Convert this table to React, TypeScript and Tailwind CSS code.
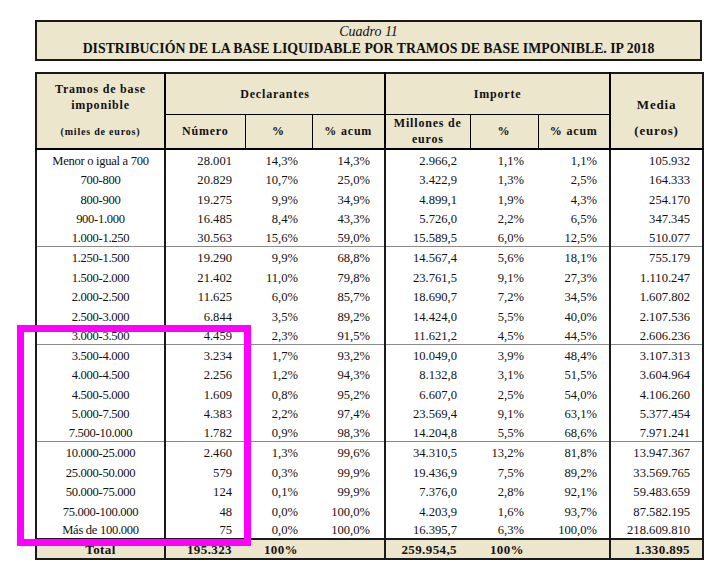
import * as React from "react";

// ---------------------------------------------------------------------------
// Data
// ---------------------------------------------------------------------------

type Row = [string, string, string, string, string, string, string, string];

const groups: Row[][] = [
  [
    ["Menor o igual a 700", "28.001", "14,3%", "14,3%", "2.966,2", "1,1%", "1,1%", "105.932"],
    ["700-800", "20.829", "10,7%", "25,0%", "3.422,9", "1,3%", "2,5%", "164.333"],
    ["800-900", "19.275", "9,9%", "34,9%", "4.899,1", "1,9%", "4,3%", "254.170"],
    ["900-1.000", "16.485", "8,4%", "43,3%", "5.726,0", "2,2%", "6,5%", "347.345"],
    ["1.000-1.250", "30.563", "15,6%", "59,0%", "15.589,5", "6,0%", "12,5%", "510.077"],
  ],
  [
    ["1.250-1.500", "19.290", "9,9%", "68,8%", "14.567,4", "5,6%", "18,1%", "755.179"],
    ["1.500-2.000", "21.402", "11,0%", "79,8%", "23.761,5", "9,1%", "27,3%", "1.110.247"],
    ["2.000-2.500", "11.625", "6,0%", "85,7%", "18.690,7", "7,2%", "34,5%", "1.607.802"],
    ["2.500-3.000", "6.844", "3,5%", "89,2%", "14.424,0", "5,5%", "40,0%", "2.107.536"],
    ["3.000-3.500", "4.459", "2,3%", "91,5%", "11.621,2", "4,5%", "44,5%", "2.606.236"],
  ],
  [
    ["3.500-4.000", "3.234", "1,7%", "93,2%", "10.049,0", "3,9%", "48,4%", "3.107.313"],
    ["4.000-4.500", "2.256", "1,2%", "94,3%", "8.132,8", "3,1%", "51,5%", "3.604.964"],
    ["4.500-5.000", "1.609", "0,8%", "95,2%", "6.607,0", "2,5%", "54,0%", "4.106.260"],
    ["5.000-7.500", "4.383", "2,2%", "97,4%", "23.569,4", "9,1%", "63,1%", "5.377.454"],
    ["7.500-10.000", "1.782", "0,9%", "98,3%", "14.204,8", "5,5%", "68,6%", "7.971.241"],
  ],
  [
    ["10.000-25.000", "2.460", "1,3%", "99,6%", "34.310,5", "13,2%", "81,8%", "13.947.367"],
    ["25.000-50.000", "579", "0,3%", "99,9%", "19.436,9", "7,5%", "89,2%", "33.569.765"],
    ["50.000-75.000", "124", "0,1%", "99,9%", "7.376,0", "2,8%", "92,1%", "59.483.659"],
    ["75.000-100.000", "48", "0,0%", "100,0%", "4.203,9", "1,6%", "93,7%", "87.582.195"],
    ["Más de 100.000", "75", "0,0%", "100,0%", "16.395,7", "6,3%", "100,0%", "218.609.810"],
  ],
];

// column padding for right-aligned numbers
const cellPad = ["", "pr-[13px]", "pr-[14px]", "pr-[14px]", "pr-[13px]", "pr-[14px]", "pr-[12px]", "pr-[12px]"];
// heavy verticals sit before these columns
const heavyLeft = [false, true, false, false, true, false, false, true];

const headCell =
  "bg-[#ece6cd] border border-black font-bold text-[12px] tracking-[0.8px] text-center align-middle leading-[16px]";

// ---------------------------------------------------------------------------
// App
// ---------------------------------------------------------------------------

export default function App() {
  return (
    <div className="relative w-[709px] h-[570px] bg-white text-[#111] font-['Liberation_Serif',serif] pt-[20px] pl-[35px]">
      {/* Title */}
      <div className="w-[667px] h-[41px] border-2 border-[#1a1a1a] bg-[#ece6cd] flex flex-col items-center justify-center">
        <div className="italic text-[14px] leading-[17px]">Cuadro 11</div>
        <div className="font-bold text-[13.8px] leading-[18px]">
          DISTRIBUCIÓN DE LA BASE LIQUIDABLE POR TRAMOS DE BASE IMPONIBLE. IP 2018
        </div>
      </div>

      {/* Table */}
      <table className="mt-[11px] w-[667px] table-fixed border-collapse border-2 border-[#1a1a1a]">
        <colgroup>
          <col className="w-[129px]" />
          <col className="w-[80px]" />
          <col className="w-[67px]" />
          <col className="w-[73px]" />
          <col className="w-[85px]" />
          <col className="w-[68px]" />
          <col className="w-[72px]" />
          <col className="w-[93px]" />
        </colgroup>
        <thead>
          <tr className="h-[41px]">
            <td rowSpan={2} className={headCell + " border-b-2"}>
              <div className="flex h-[74px] flex-col items-center justify-between pt-[7px] pb-[8px]">
                <span>
                  Tramos de base
                  <br />
                  imponible
                </span>
                <span className="text-[10px]">(miles de euros)</span>
              </div>
            </td>
            <td colSpan={3} className={headCell + " border-l-2"}>Declarantes</td>
            <td colSpan={3} className={headCell + " border-l-2"}>Importe</td>
            <td rowSpan={2} className={headCell + " border-l-2 border-b-2"}>
              <div className="flex h-[74px] flex-col items-center justify-end gap-[10px] pb-[9px]">
                <span className="text-[13px]">Media</span>
                <span className="text-[13px]">(euros)</span>
              </div>
            </td>
          </tr>
          <tr className="h-[35px]">
            <td className={headCell + " border-l-2 border-b-2"}>Número</td>
            <td className={headCell + " border-b-2"}>%</td>
            <td className={headCell + " border-b-2"}>% acum</td>
            <td className={headCell + " border-l-2 border-b-2"}>
              Millones de
              <br />
              euros
            </td>
            <td className={headCell + " border-b-2"}>%</td>
            <td className={headCell + " border-b-2"}>% acum</td>
          </tr>
        </thead>
        <tbody className="text-[12.6px] leading-[15px]">
          {groups.map((group, g) =>
            group.map((row, r) => (
              <tr key={g + "-" + r} className={"h-[19.5px] " + (r === 0 && g > 0 ? "border-t border-[#8a8a8a]" : "")}>
                {row.map((v, c) => (
                  <td
                    key={c}
                    className={
                      "p-0 align-bottom whitespace-nowrap " +
                      (c === 0 ? "text-center tracking-[-0.3px] " : "text-right " + cellPad[c] + " ") +
                      (heavyLeft[c] ? "border-l-2 border-l-[#1a1a1a]" : "")
                    }
                  >
                    {v}
                  </td>
                ))}
              </tr>
            ))
          )}
          <tr className="h-[20px] border-t-2 border-[#1a1a1a] bg-[#ece6cd] font-bold text-[13px] tracking-[0.4px]">
            <td className="text-center">Total</td>
            <td className="text-right pr-[13px] border-l-2 border-l-[#1a1a1a]">195.323</td>
            <td className="text-right pr-[14px]">100%</td>
            <td></td>
            <td className="text-right pr-[13px] border-l-2 border-l-[#1a1a1a]">259.954,5</td>
            <td className="text-right pr-[14px]">100%</td>
            <td></td>
            <td className="text-right pr-[12px] border-l-2 border-l-[#1a1a1a]">1.330.895</td>
          </tr>
        </tbody>
      </table>

      {/* Highlight annotation */}
      <div className="absolute left-[17px] top-[325px] w-[234px] h-[221px] border-[7px] border-[#ff00ff]" />
    </div>
  );
}
